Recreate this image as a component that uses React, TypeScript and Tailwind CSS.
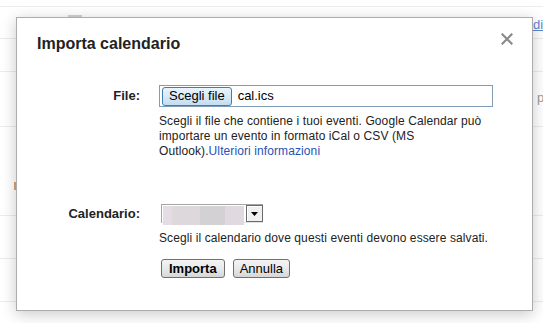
import { useState } from 'react'

const font = "font-['Liberation_Sans',Arial,sans-serif]"

function CloseIcon() {
  return (
    <svg width="12" height="12" viewBox="0 0 12 12">
      <path d="M1.5 1.5 L10.5 10.5 M10.5 1.5 L1.5 10.5" stroke="#8a8a8a" strokeWidth="2.2" strokeLinecap="square" />
    </svg>
  )
}

export default function App() {
  const [fileName] = useState('cal.ics')

  return (
    <div className={`relative w-[543px] h-[323px] overflow-hidden bg-white ${font}`}>
      {/* page behind the dialog */}
      <div className="flex flex-col">
        <div className="h-[7px] border-b border-[#ececec]" />
        <div className="h-[32px] border-b border-[#ececec] relative">
          <span className="absolute left-[533px] top-[11px] text-[13px] leading-[14px] text-[#5f87d6] underline">di</span>
        </div>
        <div className="h-[33px] border-b border-[#ececec]" />
        <div className="h-[55px] border-b border-[#ececec] relative">
          <span className="absolute left-[537px] top-[19px] text-[13px] leading-[14px] text-[#999]">p</span>
        </div>
        <div className="h-[89px] border-b border-[#ececec] relative">
          <span className="absolute left-[14px] top-[55px] w-[2px] h-[8px] bg-[#d9a27c]" />
        </div>
        <div className="h-[43px] border-b border-[#ececec]" />
        <div className="h-[43px] border-b border-[#ececec]" />
      </div>
      <div className="absolute left-[68px] top-[15px] w-[14px] h-[3px] bg-[#d2d2d2]" />

      {/* dialog */}
      <div className="absolute left-[16px] top-[17px] w-[517px] h-[294px] bg-white border border-[#acacac] shadow-[0_3px_14px_rgba(0,0,0,0.22)] pl-[20px] pt-[16px] text-[#222]">
        <div className="absolute right-[19px] top-[15px]">
          <CloseIcon />
        </div>
        <div className="h-[20px] leading-[20px] text-[16px] font-bold">Importa calendario</div>

        <div className="mt-[31px] flex items-center">
          <div className="w-[103px] text-right text-[13px] font-bold leading-[16px]">File:</div>
          <div className="ml-[19px] w-[334px] h-[22px] border border-[#7f9db9] flex items-center pl-[2px]">
            <button className="h-[19px] px-[6px] rounded-[3px] border border-[#3c7fb1] bg-gradient-to-b from-[#eaf4fc] to-[#c5ddf1] text-[13px] leading-[16px] text-black">
              Scegli file
            </button>
            <span className="ml-[6px] text-[13px] leading-[16px] text-black">{fileName}</span>
          </div>
        </div>

        <p className="mt-[7px] ml-[122px] w-[333px] text-[12px] leading-[15px] tracking-[0.1px]">
          Scegli il file che contiene i tuoi eventi. Google Calendar può importare un evento in formato iCal o CSV (MS Outlook).<a className="text-[#2a4fb8]">Ulteriori informazioni</a>
        </p>

        <div className="mt-[45px] flex items-center">
          <div className="w-[103px] text-right text-[13px] font-bold leading-[16px]">Calendario:</div>
          <div className="ml-[21px] w-[102px] h-[19px] flex border-t border-l border-[#a5a5a5] border-b border-b-[#e2e2e2]">
            <div className="flex-1 flex pl-[1px] pt-[1px]">
              <div className="w-[9px] h-[19px] bg-[#e5dde3]" />
              <div className="w-[28px] h-[19px] bg-[#dcd8dc]" />
              <div className="w-[25px] h-[19px] bg-[#d4d1d5]" />
              <div className="w-[19px] h-[19px] bg-[#e0dae0]" />
            </div>
            <div className="w-[17px] h-[17px] border border-[#6a6a6a] bg-[#f0f0f0] shadow-[inset_1px_1px_0_#ffffff] flex items-center justify-center">
              <svg width="7" height="4" viewBox="0 0 7 4">
                <path d="M0 0 H7 L3.5 4 Z" fill="#000" />
              </svg>
            </div>
          </div>
        </div>

        <p className="mt-[8px] ml-[122px] text-[12px] leading-[15px] tracking-[0.1px]">
          Scegli il calendario dove questi eventi devono essere salvati.
        </p>

        <div className="mt-[13px] ml-[124px] flex gap-[8px]">
          <button className="h-[19px] px-[7px] rounded-[3px] border border-[#707070] bg-gradient-to-b from-[#f4f4f4] via-[#e9e9e9] to-[#d6d6d6] text-[13px] leading-[16px] font-bold text-black">
            Importa
          </button>
          <button className="h-[19px] px-[6px] rounded-[3px] border border-[#707070] bg-gradient-to-b from-[#f4f4f4] via-[#e9e9e9] to-[#d6d6d6] text-[13px] leading-[16px] text-black">
            Annulla
          </button>
        </div>
      </div>
    </div>
  )
}
